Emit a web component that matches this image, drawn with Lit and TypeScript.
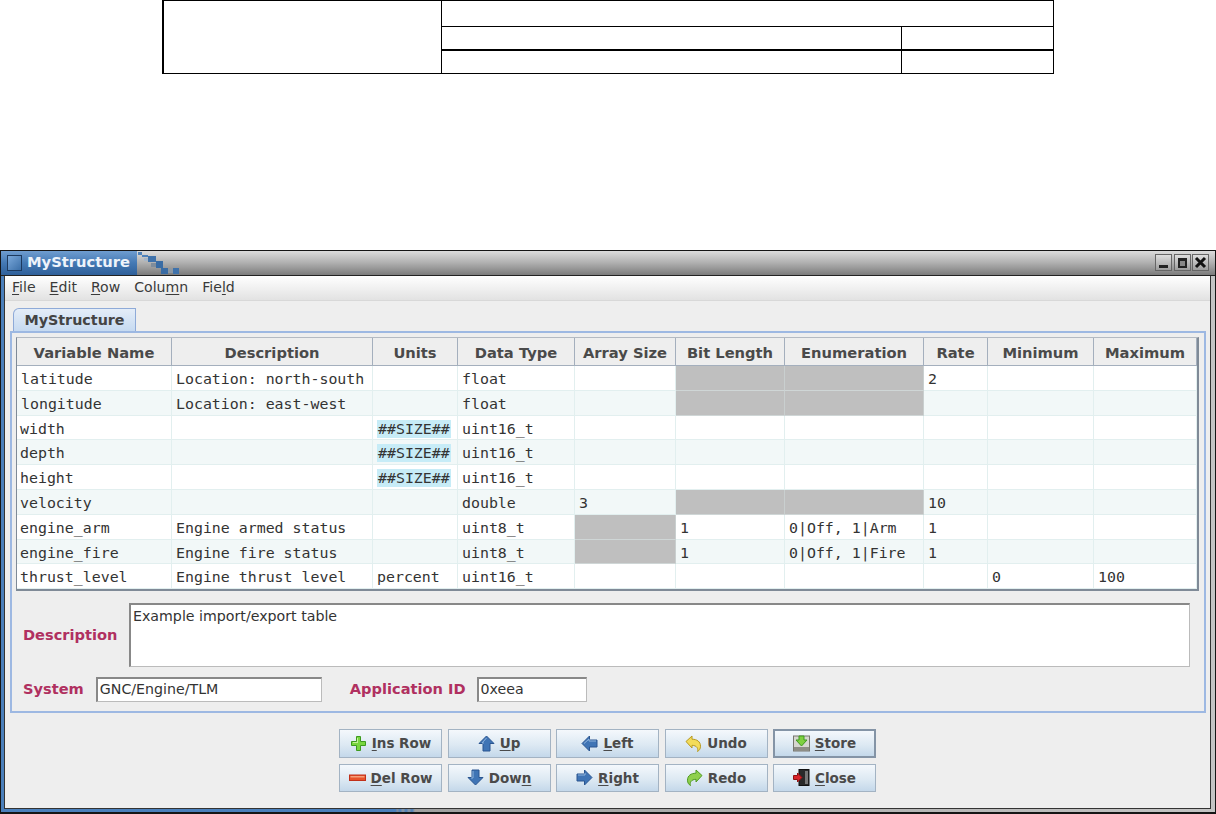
import { LitElement, html, css, svg } from "lit";
import { customElement } from "lit/decorators.js";

type Cell = string | null | { hl: string };
const X = null; // greyed out
const S = { hl: "##SIZE##" };
const HEAD = ["Variable Name","Description","Units","Data Type","Array Size","Bit Length","Enumeration","Rate","Minimum","Maximum"];
const ROWS: Cell[][] = [
  ["latitude","Location: north-south","","float","",X,X,"2","",""],
  ["longitude","Location: east-west","","float","",X,X,"","",""],
  ["width","",S,"uint16_t","","","","","",""],
  ["depth","",S,"uint16_t","","","","","",""],
  ["height","",S,"uint16_t","","","","","",""],
  ["velocity","","","double","3",X,X,"10","",""],
  ["engine_arm","Engine armed status","","uint8_t",X,"1","0|Off, 1|Arm","1","",""],
  ["engine_fire","Engine fire status","","uint8_t",X,"1","0|Off, 1|Fire","1","",""],
  ["thrust_level","Engine thrust level","percent","uint16_t","","","","","0","100"],
];

const icons: Record<string, unknown> = {
  plus: svg`<path d="M6.500 1.500h4v5h5v4h-5v5h-4v-5h-5v-4h5z" fill="#78d63f" stroke="#3d9a1e"/><path d="M7.500 3v5M3 7.500h5" stroke="#c4f09c" fill="none"/>`,
  minus: svg`<rect x="0.500" y="6" width="16" height="5.500" fill="#e8532a" stroke="#c0301a"/><rect x="1.500" y="7" width="14" height="1.500" fill="#f5a07a"/>`,
  up: svg`<path d="M8.500 1 16 8.500h-4V16H5V8.500H1z" fill="#3f74b5" stroke="#2a5590"/><path d="M8.500 3 4 8h2" stroke="#8fb4de" fill="none"/>`,
  down: svg`<path d="M8.500 16 16 8.500h-4V1H5v7.500H1z" fill="#3f74b5" stroke="#2a5590"/><path d="M6 2v7H4" stroke="#8fb4de" fill="none"/>`,
  left: svg`<path d="M1 8.500 8.500 1v4H16v7H8.500v4z" fill="#3f74b5" stroke="#2a5590"/><path d="M3 8.500 8 4v2h7" stroke="#8fb4de" fill="none"/>`,
  right: svg`<path d="M16 8.500 8.500 1v4H1v7h7.500v4z" fill="#3f74b5" stroke="#2a5590"/><path d="M2 6h7V4" stroke="#8fb4de" fill="none"/>`,
  undo: svg`<path d="M1 6.500 7 1v3.200c5 0 8.500 2.500 8.500 7 0 2.500-1.200 4.300-3 5.300 1-2.800-.5-6-5.500-6.200V13z" fill="#f3dc5a" stroke="#b89a20"/>`,
  redo: svg`<path d="M16 6.500 10 1v3.200c-5 0-8.500 2.500-8.500 7 0 2.500 1.200 4.300 3 5.300-1-2.800.5-6 5.500-6.200V13z" fill="#8fd04e" stroke="#4f9a22"/>`,
  store: svg`<rect x="0.500" y="1" width="16" height="15" fill="#d6d6cf" stroke="#77776f"/><rect x="1" y="12" width="15" height="4" fill="#8d8d86"/><path d="M6 1h5v4h3l-5.500 6L3 5h3z" fill="#7fd040" stroke="#3f9a1e"/>`,
  close: svg`<rect x="6" y="0.500" width="10" height="16" fill="#2a2a2a" stroke="#111"/><rect x="12" y="2" width="3" height="13" fill="#777"/><path d="M0.500 6.500h4V4l4.500 4.500L4.500 13v-2.500h-4z" fill="#d8232a" stroke="#8f1010"/>`,
};

const BUTTONS: [string, string, string, string][] = [
  ["plus","","I","ns Row"],["up","","U","p"],["left","","L","eft"],["undo","Undo","",""],["store","","S","tore"],
  ["minus","","D","el Row"],["down","Dow","n",""],["right","","R","ight"],["redo","Redo","",""],["close","","C","lose"],
];

const DITHER: [number, number, number, number, string][] = [
  [137,252,4,3,"#4f82ba"],[141,255,6,2,"#4f82ba"],[147,256,8,6,"#3f72ab"],[143,258,4,3,"#a8b6c6"],
  [155,261,7,7,"#3a6ca4"],[150,263,5,4,"#7f8d9c"],[160,268,7,6,"#3a6ca4"],[172,268,6,6,"#3f72ab"],[167,269,5,4,"#8c98a4"],
];

@customElement("app-root")
export class AppRoot extends LitElement {
  static styles = css`
    :host { display: block; width: 1216px; height: 814px; overflow: hidden; background: #fff;
      font-family: "DejaVu Sans", sans-serif; color: #333; }
    .doc { display: grid; grid-template-columns: 278px 460px 151px; grid-template-rows: 26px 24px 22px;
      width: 892px; height: 74px; margin-left: 162px; box-sizing: border-box;
      border: 1px solid #000; border-left-width: 2px; }
    .doc div { border-color: #000; border-style: solid; border-width: 0; }
    .doc .d1 { grid-row: 1 / 4; border-right-width: 1px; }
    .doc .d2 { grid-column: 2 / 4; border-bottom-width: 1px; }
    .doc .d3 { border-right-width: 1px; border-bottom-width: 2px; }
    .doc .d4 { border-bottom-width: 2px; }
    .doc .d5 { border-right-width: 1px; }
    .spacer { height: 176px; }
    .window { height: 564px; box-sizing: border-box; display: flex; flex-direction: column;
      border: 1px solid #151515; border-bottom: 2px solid #151515;
      background: linear-gradient(90deg, #4a7fbb 0, #4a7fbb 395px, #7f8d9c 396px, #4a7fbb 399px, #8c98a4 402px, #4a7fbb 405px, #8c98a4 408px, #4a7fbb 411px, #a0a0a0 414px, #c4c4c4 100%);
      padding: 0 4px 3px 3px; }
    .title { margin: 0 -4px 0 -3px; height: 24px; flex: none; display: flex; align-items: center; padding-left: 6px;
      background: linear-gradient(#dcdcdc 0, #b4b4b4 45%, #7c7c7c 100%); position: relative;
      border-bottom: 1px solid #222; }
    .blue { position: absolute; left: 0; top: 0; bottom: 0; width: 136px;
      background: linear-gradient(#6f9dd0 0, #4479b4 50%, #2f609a 100%); }
    .dither { position: absolute; left: 0; top: 0; width: 200px; height: 24px; }
    .t-icon { position: relative; width: 15px; height: 16px; box-sizing: border-box; background: linear-gradient(135deg, #7aa8da, #3b6fa8);
      border: 1px solid #1d3a5f; flex: none; }
    .t-text { position: relative; margin-left: 5px; padding-bottom: 3px; font-size: 14.700px; font-weight: 700; color: #eef3fa; }
    .wbtns { position: absolute; right: 6px; top: 3px; display: flex; gap: 1.500px; }
    .wbtn { width: 17px; height: 17px; display: block; }
    .client { flex: 1; min-height: 0; background: #eeeeee; display: flex; flex-direction: column;
      border-left: 1px solid #333; border-right: 1px solid #333; border-bottom: 1px solid #333; }
    .menu { height: 25px; box-sizing: border-box; flex: none; display: flex; align-items: center; gap: 14px; padding: 0 0 3px 7px;
      background: linear-gradient(#ffffff, #e2e2e2); border-bottom: 1px solid #d8d8d8;
      font-size: 14.100px; color: #3a3a3a; }
    u { text-decoration: underline; text-underline-offset: 2px; }
    .tabs { height: 30px; flex: none; display: flex; align-items: flex-end; padding-left: 8px; box-sizing: border-box; }
    .tab { height: 23px; width: 123px; box-sizing: border-box; border: 1px solid #8eaad8; border-bottom: 0; border-radius: 6px 0 0 0;
      background: linear-gradient(#e4edf8, #c6daf1); text-align: center; font-size: 14.300px; font-weight: 700; color: #444; line-height: 22px; }
    .pane { margin: 0 4px 0 5px; height: 382px; flex: none; box-sizing: border-box; border: 2px solid #9db8e2;
      display: flex; flex-direction: column; padding: 4px 0 0 4px; }
    .table { width: 1183px; box-sizing: border-box; border: 1px solid #7f8a97; border-top-color: #b4bac2; border-width: 1px 2px 2px 1px; flex: none;
      display: grid; grid-template-columns: 155px 201px 85px 117px 101px 109px 139px 64px 106px 103px;
      grid-template-rows: 28px repeat(9, 24.800px); background: #fff; }
    .th { display: flex; align-items: center; justify-content: center; padding-top: 1px; font-size: 14.700px; font-weight: 700;
      color: #4a4a4a; background: #eeeeee; box-sizing: border-box; border-right: 1px solid #a4afbd; border-bottom: 1px solid #a4afbd; }
    .td { box-sizing: border-box; padding-left: 4px; font-family: "DejaVu Sans Mono", monospace; font-size: 14.900px; color: #333;
      white-space: nowrap; overflow: hidden; border-right: 1px solid #e2efef; border-bottom: 1px solid #e2efef; line-height: 26px; }
    .td.alt { background: #f2f8f8; }
    .td.first { padding-left: 3px; }
    .td.x { background: #bfbfbf; border-right-color: #c9cfcf; border-bottom-color: #cfd6d6; }
    .hl { background: #c7ecf7; display: inline-block; line-height: 18px; padding: 0 1px; }
    .desc { display: flex; align-items: center; flex: none; margin-top: 12px; }
    .lab { color: #b03060; font-weight: 700; font-size: 14.600px; padding-bottom: 2px; }
    .desc .lab { width: 113px; padding-left: 7px; box-sizing: border-box; }
    .area { width: 1061px; height: 64px; box-sizing: border-box; background: #fff; border: 1px solid #bbb; border-top: 2px solid #888; border-left: 2px solid #888;
      padding: 3px 2px; font-size: 14.200px; color: #333; }
    .row2 { display: flex; align-items: center; flex: none; margin-top: 10px; padding-left: 7px; }
    .input { height: 25px; box-sizing: border-box; background: #fff; border: 1px solid #bbb; border-top: 2px solid #888; border-left: 2px solid #888;
      font-size: 14.200px; color: #333; padding-left: 2px; line-height: 21px; }
    .i1 { width: 226px; margin-left: 12px; }
    .i2 { width: 110px; margin-left: 11px; }
    .l2 { margin-left: 28px; }
    .buttons { margin: 16px 0 0 334px; display: grid; grid-template-columns: repeat(5, 103px); grid-auto-rows: 28.500px; column-gap: 5.500px; row-gap: 6px; flex: none; }
    .btn { box-sizing: border-box; border: 1px solid #a3b3c3; background: linear-gradient(#f4f8fc, #dde9f3 55%, #c4d8ea);
      display: flex; align-items: center; justify-content: center; gap: 5px; font-size: 13.500px; font-weight: 700; color: #4a4a4a; }
    .btn.def { border: 2px solid #8494a6; }
    .btn svg { width: 17px; height: 17px; flex: none; }
  `;

  private cell(c: Cell, r: number, i: number) {
    const cls = ["td", r % 2 ? "alt" : "", i === 0 && r >= 2 ? "first" : "", c === null ? "x" : ""].join(" ");
    if (c === null) return html`<div class=${cls}></div>`;
    if (typeof c === "object") return html`<div class=${cls}><span class="hl">${c.hl}</span></div>`;
    return html`<div class=${cls}>${c}</div>`;
  }

  private wbtn(glyph: unknown) {
    return html`<svg class="wbtn" viewBox="0 0 17 17">
      <defs><linearGradient id="wg" x1="0" y1="0" x2="0" y2="1"><stop offset="0" stop-color="#e0e0e0"/><stop offset="1" stop-color="#9a9a9a"/></linearGradient></defs>
      <rect x="0.500" y="0.500" width="16" height="16" fill="url(#wg)" stroke="#666"/>${glyph}</svg>`;
  }

  render() {
    return html`
      <div class="doc"><div class="d1"></div><div class="d2"></div><div class="d3"></div><div class="d4"></div><div class="d5"></div><div></div></div>
      <div class="spacer"></div>
      <div class="window">
        <div class="title">
          <div class="blue"></div>
          <svg class="dither" viewBox="0 251 200 24">
            ${DITHER.map(([x, y, w, h, f]) => svg`<rect x=${x} y=${y} width=${w} height=${h} fill=${f}/>`)}
          </svg>
          <div class="t-icon"></div><div class="t-text">MyStructure</div>
          <div class="wbtns">
            ${this.wbtn(svg`<rect x="4" y="11" width="9" height="3" fill="#222"/>`)}
            ${this.wbtn(svg`<rect x="5" y="5" width="7" height="8" fill="#888" stroke="#222" stroke-width="2"/><rect x="4" y="4" width="9" height="3" fill="#222"/>`)}
            ${this.wbtn(svg`<path d="M4 4l9 9M13 4l-9 9" stroke="#111" stroke-width="3" fill="none"/>`)}
          </div>
        </div>
        <div class="client">
          <div class="menu">
            <span><u>F</u>ile</span><span><u>E</u>dit</span><span><u>R</u>ow</span><span>Colu<u>m</u>n</span><span>Fie<u>l</u>d</span>
          </div>
          <div class="tabs"><div class="tab">MyStructure</div></div>
          <div class="pane">
            <div class="table">
              ${HEAD.map((h) => html`<div class="th">${h}</div>`)}
              ${ROWS.map((row, r) => row.map((c, i) => this.cell(c, r, i)))}
            </div>
            <div class="desc"><div class="lab">Description</div><div class="area">Example import/export table</div></div>
            <div class="row2"><div class="lab">System</div><div class="input i1">GNC/Engine/TLM</div>
              <div class="lab l2">Application ID</div><div class="input i2">0xeea</div></div>
          </div>
          <div class="buttons">
            ${BUTTONS.map(([ic, pre, ul, post]) => html`<div class="btn ${ic === "store" ? "def" : ""}">
              <svg viewBox="0 0 17 17">${icons[ic]}</svg><span>${pre}${ul ? html`<u>${ul}</u>` : ""}${post}</span></div>`)}
          </div>
        </div>
      </div>`;
  }
}
